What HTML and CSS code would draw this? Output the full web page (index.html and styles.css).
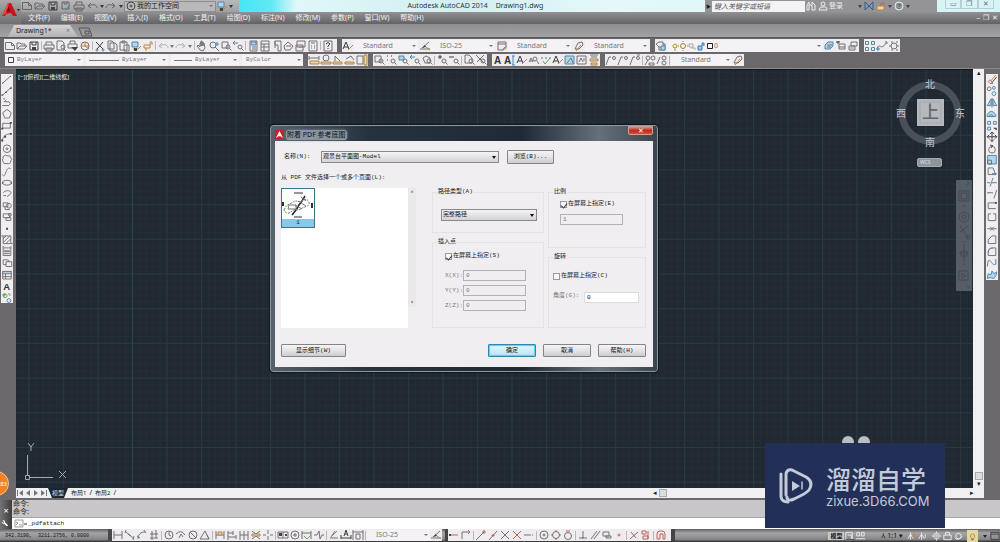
FILE: index.html
```html
<!DOCTYPE html>
<html lang="zh-CN">
<head>
<meta charset="utf-8">
<title>Autodesk AutoCAD 2014 Drawing1.dwg</title>
<link rel="stylesheet" href="styles.css">
</head>
<body>
<header class="top">
  <button class="applogo" aria-label="应用程序菜单"><svg viewBox="0 0 21 24"><path d="M2 16 8 3h3l6 13h-4l-2-3-5 1-1 2z" fill="#c8141c"/><path d="M8 3 2 16l5-4 2-9z" fill="#ef4a48"/><path d="m9 6 1 5-4 1z" fill="#7d0b10"/><path d="M17 9h3l-1.500 2z" fill="#222"/></svg></button>
  <div class="topmain">
    <div class="titlebar">
      <div class="quick">
        <div class="tools wide" data-tools="new open save saveas print undo ^ redo ^"></div>
        <label class="combo space"><svg class="mini" viewBox="0 0 12 12"><circle cx="6" cy="6" r="4"/><circle cx="6" cy="6" r="1"/></svg><select aria-label="工作空间"><option>我的工作空间</option></select></label>
        <div class="tools" data-tools="match ^"></div>
      </div>
      <h1 class="title"><span>Autodesk AutoCAD 2014</span><span>Drawing1.dwg</span></h1>
      <div class="info">
        <span class="play">▶</span>
        <input class="search" aria-label="搜索" placeholder="键入关键字或短语">
        <div class="tools" data-tools="binoc user"></div><button class="login">登录</button>
        <div class="tools" data-tools="^ exchange lock ^ help ^"></div>
      </div>
      <div class="winbtns"><button aria-label="最小化">▭</button><button aria-label="还原">❐</button><button aria-label="关闭">✕</button></div>
    </div>
    <nav class="menubar">
      <button>文件(F)</button><button>编辑(E)</button><button>视图(V)</button><button>插入(I)</button><button>格式(O)</button><button>工具(T)</button><button>绘图(D)</button><button>标注(N)</button><button>修改(M)</button><button>参数(P)</button><button>窗口(W)</button><button>帮助(H)</button>
      <span class="docbtns"><button aria-label="最小化文档">–</button><button aria-label="还原文档">❐</button><button aria-label="关闭文档">✕</button></span>
    </nav>
  </div>
</header>
<div class="filetabs">
  <button class="filetab"><span>Drawing1*</span><span class="x">×</span></button>
  <button class="newtab" aria-label="新建"><svg viewBox="0 0 16 10"><path d="M1 1h10l3 8H4zM7 4h4v3H7z" fill="none" stroke="#555"/></svg></button>
</div>
<div class="toolrows">
  <div class="row">
    <div class="tools bar first" data-tools="new open save | print preview publish web | cut copy paste match brush | undo ^ redo ^ | hand zoom zwin zprev | props grid palette sheet markup calc | qmark"></div>
    <div class="bar">
      <div class="tools" data-tools="txtstyle"></div><label class="combo style"><select aria-label="文字样式"><option>Standard</option></select></label>
      <div class="tools" data-tools="dimstyle"></div><label class="combo style"><select aria-label="标注样式"><option>ISO-25</option></select></label>
      <div class="tools" data-tools="tabstyle"></div><label class="combo style"><select aria-label="表格样式"><option>Standard</option></select></label>
      <div class="tools" data-tools="leadstyle"></div><label class="combo style"><select aria-label="多重引线样式"><option>Standard</option></select></label>
    </div>
    <div class="bar">
      <div class="tools" data-tools="layers"></div>
      <label class="combo layer"><svg viewBox="0 0 44 12"><g fill="none" stroke="#666"><path d="M4 8c-4-5 6-5 2 0zM4 10h2" stroke="#a98b2a" fill="#fff3a0"/><circle cx="13" cy="6" r="2.500" stroke="#a0803a"/><path d="M13 1v1M13 10v1M8 6h1M17 6h1" stroke="#a0803a"/><path d="M19 4h4v3h-4zM21 8h4v2" stroke="#aaa"/><path d="M28 6h4v4h-4zM32 6V3h2v3" stroke="#3a7fae" fill="#9cc9e2"/><path d="M37.500 3.500h5v5h-5z" stroke="#222"/></g></svg><select aria-label="图层"><option>0</option></select></label>
      <div class="tools" data-tools="lmake lprev lstate"></div>
    </div>
    <div class="tools bar" data-tools="blocks curve gear"></div>
  </div>
  <div class="row second">
    <div class="bar props">
      <label class="combo c1"><svg class="mini" viewBox="0 0 12 12"><path d="M3.500 3.500h5v5h-5z"/></svg><select aria-label="颜色"><option>ByLayer</option></select></label>
      <label class="combo c2"><span class="rule"></span><select aria-label="线型"><option>ByLayer</option></select></label>
      <label class="combo c3"><span class="rule short"></span><select aria-label="线宽"><option>ByLayer</option></select></label>
      <label class="combo c4"><select aria-label="打印样式"><option>ByColor</option></select></label>
    </div>
    <div class="tools bar" data-tools="odist oarea omass olist oid"></div>
    <div class="tools bar" data-tools="zwin zdyn zscale zprev zobj | zin zout | zall zext"></div>
    <div class="tools bar" data-tools="A AI txtstyle find spell txtstyle tscale tjust tconv"></div>
    <div class="bar">
      <div class="tools" data-tools="lead1 lead1 lead2 | lead3 lead4 |"></div>
      <label class="combo c5"><select aria-label="引线样式"><option>Standard</option></select></label>
      <div class="tools" data-tools="leadstyle"></div>
    </div>
  </div>
</div>
<main class="work">
  <aside class="side left"><div class="tools column draw" data-tools="line xline pline polygon rect arc circle cloud spline ellipse earc insert block point hatch gradient region table A addsel"></div></aside>
  <section class="view">
    <div class="canvas">
      <svg class="gridlines" aria-hidden="true">
        <defs>
          <pattern id="minor" width="6.900" height="6.940" patternUnits="userSpaceOnUse" x="116" y="30"><path d="M.5 0V7M0 .5H7" stroke="#242c36" stroke-width="1" fill="none"/></pattern>
          <pattern id="major" width="34.500" height="34.700" patternUnits="userSpaceOnUse" x="116" y="30"><path d="M.5 0V35M0 .5H35" stroke="#2b3740" stroke-width="1" fill="none"/></pattern>
        </defs>
        <rect width="100%" height="100%" fill="url(#minor)"/><rect width="100%" height="100%" fill="url(#major)"/>
        <path d="M116.500 0V420" stroke="#29493f"/>
      </svg>
      <span class="viewlabel">[−][俯视][二维线框]</span>
      <svg class="ucs" viewBox="0 0 46 42" fill="none" stroke="#a4a9af"><path d="M7.500 12v20M10 34.500h23M5.500 32.500h4v4h-4z"/><path d="m8 0 3 4 3-4M11 4v4M39 28l7 7M46 28l-7 7"/></svg>
      <div class="cube">
        <svg viewBox="0 0 72 76"><circle cx="36" cy="38" r="28" fill="none" stroke="#48505a" stroke-width="7"/><path d="M23 24h27v27H23z" fill="#b5b8bc"/><path d="M26 27h21v21H26z" fill="none" stroke="#a3a7ac"/></svg>
        <b class="n">北</b><b class="w">西</b><b class="e">东</b><b class="s">南</b><b class="face">上</b>
      </div>
      <button class="wcs">WCS</button>
      <svg class="navbar" viewBox="0 0 16 111"><rect width="16" height="111" rx="1" fill="#555d66"/><g fill="none" stroke="#434b54"><path d="M11 2l3 3M14 2l-3 3M3 11h10v10H3zM5 13h6v6H5zM7 26h3M4 52l8-6M4 46l8 12M8 64v18M3 73h10M5 71h6v5H5zM7 62h3M7 84h3M3 91h9v9H3zM6 93v5l4-2zM11 107h3"/><circle cx="8" cy="37" r="5"/><circle cx="8" cy="37" r="2"/><circle cx="12" cy="57" r="2"/></g></svg>
      <i class="head h1"></i><i class="head h2"></i>
    </div>
    <div class="vscroll"><span>▴</span><i></i><span>▾</span></div>
    <div class="sheets">
      <button aria-label="首页"><svg viewBox="0 0 8 8"><path d="M1 1h1v6H1zM7 1v6L3 4z"/></svg></button><button aria-label="上一页"><svg viewBox="0 0 8 8"><path d="M6 1v6L2 4z"/></svg></button><button aria-label="下一页"><svg viewBox="0 0 8 8"><path d="M2 1v6l4-3z"/></svg></button><button aria-label="末页"><svg viewBox="0 0 8 8"><path d="M6 1h1v6H6zM1 1v6l4-3z"/></svg></button>
      <button class="sheet on">模型</button><button class="sheet">布局1</button><span>/</span><button class="sheet">布局2</button><span>/</span>
      <div class="hscroll"><span>◂</span><i></i><span class="end">▸</span></div>
    </div>
  </section>
  <aside class="side right"><div class="tools column modify" data-tools="erase mcopy mirror offset array move rotate scale stretch trim extend breakp break join chamfer fillet blend explode"></div></aside>
</main>
<section class="command">
  <div class="cmdside"><button aria-label="关闭命令行">×</button><button aria-label="自定义"><svg viewBox="0 0 10 10"><path d="m2 2 2 2-1 1-2-2c0 3 2 3 3 3l3 3 2-1-4-4c0-2-1-3-3-2z" fill="#fff"/></svg></button></div>
  <div class="cmdmain">
    <div class="history"><div>命令:</div><div>命令:</div></div>
    <label class="cmdline"><svg viewBox="0 0 14 10"><path d="M1 1h8v7H1zM2 3l2 1-2 2M5 6h3" fill="none" stroke="#999"/><path d="M10 5h3" stroke="#333"/></svg><input aria-label="命令" value="_pdfattach"></label>
  </div>
</section>
<footer class="status">
  <div class="coords">342.3190,&nbsp; 3211.2756, 0.0000</div>
  <div class="bar"><div class="tools" data-tools="dlin dali darc dord | drad djog ddia dang | dqck dbase dcont dspace dbreak | dtol dctr dinsp djl | dedit dtedit dupd |"></div><label class="combo dim"><select aria-label="当前标注样式"><option>ISO-25</option></select></label><div class="tools" data-tools="dimstyle"></div></div>
  <div class="tools bar snap" data-tools="strack sfrom | send smid sint sapp sext | circle squad stan | sperp spar sins snode | snear snone | sset"></div>
  <div class="tray">
    <button class="model">模型</button><div class="tools" data-tools="layout quick"></div>
    <button class="annot">⅄ 1:1 ▾</button><div class="tools" data-tools="avis aauto"></div>
    <div class="tools" data-tools="gear2 lock2 hw"></div><div class="tools hot" data-tools="bulb"></div><div class="tools" data-tools="^ clean"></div>
  </div>
</footer>

<section class="dialog" role="dialog" aria-labelledby="dlgtitle">
  <div class="dlghead"><svg viewBox="0 0 10 10"><path d="M0 0h10v10H0z" fill="#c3222a"/><path d="m1 9 4-8 4 8-3-2H4z" fill="#fff"/></svg><h2 id="dlgtitle">附着 PDF 参考底图</h2><button class="close" aria-label="关闭">✕</button></div>
  <form class="dlgbody">
    <div class="namerow"><label for="name">名称(N):</label><div class="combo drop name"><select id="name"><option>观景台平面图-Model</option></select></div><button type="button" class="btn browse">浏览(B)...</button></div>
    <p class="pick">从 PDF 文件选择一个或多个页面(L):</p>
    <div class="cols">
      <div class="pages">
        <div class="list"><button type="button" class="thumb"><svg viewBox="0 0 32 30" fill="none" stroke="#333"><path d="M12 4h9M12 28h8"/><path d="M1 17v-4M30 14v5" stroke-width="2"/><path d="m10 26 4-5 3-5 3-4 3-5" stroke="#222" stroke-width="1.500"/><path d="M2 21c3-7 6-5 9-8 4-3 6 2 10-2 3-2 7 1 6 4-2 4-5 2-8 5-3 2-6-1-9 2-3 3-6 3-8-1z" stroke="#777" stroke-dasharray="2 1"/><path d="M7 16h7v4H6zM16 12l8 5M19 8l5 4M13 16l7 4" stroke="#777"/></svg><span>1</span></button></div>
        <div class="listbar"><span>▴</span><span>▾</span></div>
      </div>
      <div class="col">
        <fieldset class="g1"><legend>路径类型(A)</legend><div class="combo drop"><select aria-label="路径类型"><option>完整路径</option></select></div></fieldset>
        <fieldset class="g2"><legend>插入点</legend>
          <label class="check"><input type="checkbox" checked>在屏幕上指定(S)</label>
          <div class="xyz"><label for="x">X(X):</label><input id="x" value="0" disabled><label for="y">Y(Y):</label><input id="y" value="0" disabled><label for="z">Z(Z):</label><input id="z" value="0" disabled></div>
        </fieldset>
      </div>
      <div class="col last">
        <fieldset class="g3"><legend>比例</legend><label class="check"><input type="checkbox" checked>在屏幕上指定(E)</label><input aria-label="比例" value="1" disabled></fieldset>
        <fieldset class="g4"><legend>旋转</legend><label class="check"><input type="checkbox">在屏幕上指定(C)</label><div class="angle"><label for="ang">角度(G):</label><input id="ang" value="0"></div></fieldset>
      </div>
    </div>
    <div class="actions"><button type="button" class="btn detail">显示细节(W)</button><button type="button" class="btn ok">确定</button><button type="button" class="btn">取消</button><button type="button" class="btn">帮助(H)</button></div>
  </form>
</section>
<button class="badge">83</button>
<aside class="mark">
  <svg viewBox="0 0 34 36" fill="none" stroke="#c3cad8" stroke-width="3" stroke-linecap="round" stroke-linejoin="round"><path d="M2 6v23q1 5 7 5"/><path d="M7 27V7q0-6 6-5l14 7q8 5 3 13-2 3-15 9-7 3-7-2"/><path d="m13 13 8 5-8 5z" fill="#c3cad8" stroke="none"/><path d="M23 14v7" stroke-width="1.500"/></svg>
  <div><strong>溜溜自学</strong><span>zixue.3D66.COM</span></div>
</aside>
<script src="tools.js"></script>
</body>
</html>
```
FILE: styles.css
```css
* { box-sizing: border-box; }
body { margin: 0; height: 100vh; display: flex; flex-direction: column; overflow: hidden; position: relative; background: #6b696c; color: #222; font: 7px/8px "Noto Sans", "Noto Sans CJK SC", sans-serif; }
button, input, select { font: inherit; color: inherit; border: 0; padding: 0; margin: 0; background: none; border-radius: 0; min-width: 0; }
button { white-space: nowrap; }
svg { display: block; flex: none; }
i { font-style: normal; }

.tools { display: flex; align-items: center; }
.tools button { width: 12px; height: 12px; flex: none; }
.tools button svg { width: 12px; height: 12px; fill: none; stroke: #727174; }
.tools .caret { width: 6px; }
.tools button.caret svg { width: 6px; fill: #777; stroke: none; }
.tools .sep { width: 1px; height: 9px; margin: 0 1px; background: #b9b7ba; flex: none; }
.tools .b { stroke: #4b87b2; }
.tools .bf { stroke: #4b87b2; fill: #b4d6ea; }
.tools .o { stroke: #b8863a; }
.tools .of { stroke: #ae8748; fill: #eed3a0; }
.tools .r { stroke: #bd6158; }
.tools .g { stroke: #5ea55e; }
.bar .l { stroke: #b4b2b6; }
.tools .k { fill: #444; stroke: none; }
.tools .d { stroke: #3c3c3e; }
.tools text { fill: #333; stroke: none; font: bold 10px "Liberation Sans", sans-serif; }
.combo { display: flex; align-items: center; color: #777; background: #f4f2f5; }
.combo::after { content: ""; border: 2px solid transparent; border-top: 2px solid #777; border-bottom: 0; margin-right: 2px; flex: none; }
.combo select { appearance: none; flex: 1; height: 11px; outline: 0; }
.mini { width: 12px; height: 12px; fill: none; stroke: #444; }

.top { display: flex; height: 24px; flex: none; }
.applogo { width: 21px; height: 24px; background: linear-gradient(#aaa, #6f6f71); }
.applogo svg { width: 21px; height: 24px; }
.topmain { flex: 1; min-width: 0; }
.titlebar { height: 12px; display: flex; background: linear-gradient(90deg, #38e4f0 200px, #5fe9f5 250px, #dff7f8 275px, #d3eff2 45%, #e4f8f9 60%, #d6f4f5); }
.quick { display: flex; align-items: center; width: 218px; background: linear-gradient(#b9b8ba, #a09fa1); }
.quick .tools button svg { stroke: #666; }
.quick .tools button.caret svg { stroke: none; fill: #333; }
.wide button { width: 13px; }
.wide .caret { width: 6px; }
.space { width: 92px; height: 11px; background: #b9b8ba; color: #222; border: 1px solid #8d8c8e; }
.title { flex: 1; display: flex; justify-content: center; gap: 8px; margin: 0; padding-left: 7px; font-size: 7px; line-height: 12px; font-weight: 400; color: #333; }
.info { width: 232px; background: #949395; display: flex; align-items: center; color: #eee; }
.play { font-size: 5px; width: 7px; color: #222; text-align: center; }
.search { width: 93px; height: 11px; background: #f3f2f4; padding-left: 2px; font-style: italic; }
.search::placeholder { color: #555; opacity: 1; }
.info .tools button svg { stroke: #eee; }
.info .tools .b { stroke: #2f5d94; }
.info .tools button.caret svg { stroke: none; fill: #444; }
.login { width: 28px; text-align: left; }
.winbtns { width: 63px; padding: 0 6px 3px 8px; display: flex; }
.winbtns button { flex: 1; color: #667; line-height: 8px; border: 1px solid #b8ced4; border-top: 0; }
.menubar { height: 12px; display: flex; align-items: center; background: linear-gradient(#919092, #626163); color: #f2f2f2; padding-left: 7px; gap: 11px; }
.menubar > button { line-height: 12px; }
.docbtns { margin-left: auto; display: flex; gap: 3px; padding-right: 2px; }

.filetabs { height: 14px; flex: none; display: flex; align-items: flex-end; padding-left: 8px; background: linear-gradient(#8e8d8f, #a3a2a4); border-bottom: 1px solid #555; }
.filetab { width: 70px; height: 12px; padding: 0 8px; display: flex; justify-content: space-between; align-items: center; color: #222; background: linear-gradient(#d3d2d4, #b4b3b5); clip-path: polygon(6px 0, 62px 0, 100% 100%, 0 100%); }
.filetab .x { color: #777; }
.newtab svg { width: 16px; height: 10px; }

.toolrows { flex: none; display: flex; flex-direction: column; gap: 2px; padding: 1px 0 2px 4px; background: #6a686b; border-bottom: 1px solid #8a888b; }
.row { display: flex; gap: 5px; height: 13px; }
.second { height: 12px; }
.bar { display: flex; align-items: center; background: #eeecef; }
.first { padding-right: 3px; }
.row .combo { height: 12px; }
.style { width: 64px; margin-right: 1px; padding-left: 9px; }
.layer { width: 156px; }
.layer svg { width: 44px; height: 12px; margin-left: 3px; }
.props { gap: 3px; margin-left: 1px; font: 6px/8px "Liberation Mono", monospace; }
.c1 { width: 78px; }
.c2 { width: 82px; }
.c3 { width: 68px; }
.c4 { width: 61px; padding-left: 4px; }
.c5 { width: 61px; padding-left: 10px; }
.rule { width: 30px; height: 1px; background: #777; margin: 0 3px; }
.short { width: 18px; }

.work { flex: 1; min-height: 0; display: flex; }
.side { width: 16px; flex: none; padding-top: 5px; background: #6b696c; }
.column { display: grid; grid-auto-rows: minmax(0, 1fr); align-items: stretch; width: 12px; background: #f0eef1; }
.column button { height: auto; min-height: 0; }
.column button svg { height: 100%; }
.draw { height: 229px; margin-left: 1px; }
.modify { height: 206px; margin-left: 2px; }
.view { flex: 1; min-width: 0; display: grid; grid-template-columns: 1fr 11px; grid-template-rows: 1fr 10px; }
.canvas { position: relative; overflow: hidden; background: #202832; border-top: 1px solid #111820; }
.gridlines { width: 100%; height: 100%; }
.viewlabel { position: absolute; left: 2px; top: 3px; font-size: 6px; color: #e2e5e8; }
.ucs { position: absolute; left: 4px; bottom: 3px; width: 46px; height: 42px; }
.cube { position: absolute; right: 7px; top: 5px; width: 72px; height: 76px; }
.cube b { position: absolute; font-weight: 500; font-size: 10px; line-height: 12px; color: #b4b9bf; }
.cube .n { left: 31px; top: 3px; }
.cube .s { left: 31px; bottom: 3px; }
.cube .w { left: 2px; top: 32px; }
.cube .e { right: 1px; top: 32px; }
.cube .face { left: 28px; top: 28px; font-size: 17px; line-height: 18px; color: #62676d; }
.wcs { position: absolute; right: 31px; top: 88px; width: 25px; height: 9px; border: 1px solid #a6aab0; border-radius: 2px; background: #8f949b; color: #dfe2e5; font-size: 5px; line-height: 7px; text-align: left; padding-left: 2px; }
.navbar { position: absolute; right: 1px; top: 110px; width: 16px; height: 111px; }
.head { position: absolute; bottom: 40px; width: 12px; height: 12px; border-radius: 50%; background: #b9bcc0; }
.h1 { right: 119px; }
.h2 { right: 103px; }
.vscroll { background: #f0eff2; display: flex; flex-direction: column; align-items: center; }
.vscroll i { margin-top: auto; width: 8px; height: 8px; border: 1px solid #aaa; background: #ddd; }
.sheets { grid-column: 1 / 3; background: #f0eff2; display: flex; align-items: center; }
.sheets button svg { width: 8px; height: 8px; fill: #777; }
.sheet { padding: 0 3px; font-size: 6px; line-height: 10px; }
.sheets .on { background: #1d242d; color: #ddd; padding: 0 4px; clip-path: polygon(0 0, 100% 0, 80% 100%, 20% 100%); }
.hscroll { margin-left: auto; width: 331px; display: flex; align-items: center; gap: 2px; }
.hscroll i { width: 8px; height: 8px; border: 1px solid #aaa; background: #ddd; }
.hscroll .end { margin-left: auto; margin-right: 10px; }

.command { flex: none; display: flex; height: 31px; border-top: 2px solid #6b696c; }
.cmdside { width: 12px; background: linear-gradient(90deg, #747375, #3c3c3e); display: flex; flex-direction: column; align-items: center; padding-top: 7px; gap: 4px; color: #fff; }
.cmdside button { width: 10px; line-height: 8px; font-size: 9px; }
.cmdside svg { width: 8px; height: 8px; }
.cmdmain { flex: 1; display: flex; flex-direction: column; }
.history { background: #c8c6c9; padding: 0 1px; height: 18px; border-bottom: 1px solid #a5a3a6; }
.cmdline { flex: 1; background: #fff; display: flex; align-items: center; padding-left: 2px; }
.cmdline svg { width: 14px; height: 10px; }
.cmdline input { flex: 1; font: 6px/8px "Liberation Mono", monospace; height: 10px; outline: 0; }

.status { flex: none; height: 13px; display: flex; background: linear-gradient(#5f5f61, #a5a5a7 30%, #868688 80%, #2b2b2d); }
.coords { width: 112px; padding: 4px 0 0 5px; font: 5px/6px "Liberation Mono", monospace; color: #111; border-right: 4px solid #4a4a4c; }
.status .bar { height: 12px; }
.dim { width: 63px; height: 11px; padding-left: 9px; }
.snap { margin-left: 3px; border-left: 3px solid #444; border-right: 4px solid #444; width: 230px; }
.tray { margin-left: auto; display: flex; align-items: center; }
.tray button { color: #111; }
.tray .tools button { width: 11px; }
.tray .tools button svg { stroke: #eee; width: 11px; }
.tray .tools button.caret { width: 8px; }
.tray .tools button.caret svg { width: 8px; stroke: none; fill: #222; }
.model { padding: 0 1px 0 2px; background: #c9c9cb; font-weight: 700; font-size: 6px; }
.annot { margin: 0 3px 0 16px; }
.tray .tools + .tools { margin-left: 3px; }
.hot { background: #e4d7a0; }

.dialog { position: absolute; left: 270px; top: 125px; width: 388px; padding: 2px 4px 4px; border: 1px solid #8d99a5; outline: 1px solid #10161d; border-radius: 3px; background: linear-gradient(90deg, #56616c, #26323f 25%, #1f2a36 65%, #66707b 85%, #39444f); }
.dlghead { height: 13px; display: flex; align-items: center; gap: 2px; }
.dlghead svg { width: 9px; height: 9px; }
.dlghead h2 { margin: 0; padding: 0 1px; font-size: 7px; line-height: 10px; font-weight: 400; color: #0c1015; background: #8995a0; border-radius: 3px; box-shadow: 0 0 3px #7d8994; }
.close { margin: -2px 0 0 auto; align-self: flex-start; width: 25px; height: 9px; line-height: 8px; color: #fff; border: 1px solid #d79a90; border-radius: 0 0 2px 2px; background: linear-gradient(#d98c80, #bb2d1c 50%, #d0513c); }
.dlgbody { padding: 9px 7px 10px 6px; color: #222; background: #f0eef1; font: 6px/8px "Liberation Mono", "Noto Sans CJK SC", monospace; }
.namerow { display: flex; align-items: center; height: 14px; }
.namerow label { width: 40px; padding-left: 3px; }
.drop { height: 12px; border: 1px solid #8b898c; background: linear-gradient(#f4f3f5, #d4d2d5); color: #111; }
.drop::after { border-width: 3px 2px 0; border-top-color: #111; }
.drop select { height: 10px; padding-left: 1px; }
.name { width: 178px; }
.btn { width: 48px; height: 13px; border: 1px solid #858386; border-radius: 1px; background: linear-gradient(#f5f4f6, #e4e3e5 50%, #cccbcd); color: #111; line-height: 10px; }
.browse { width: 47px; height: 14px; margin-left: 8px; }
.pick { margin: 10px 0 6px; }
.cols { display: flex; }
.pages { width: 135px; display: flex; margin-right: 16px; }
.list { flex: 1; background: #fff; }
.thumb { display: block; width: 34px; height: 40px; border: 1px solid #3d7488; background: #fff; }
.thumb svg { width: 32px; height: 30px; }
.thumb span { display: block; height: 8px; line-height: 8px; background: #86c9ea; }
.listbar { width: 8px; display: flex; flex-direction: column; justify-content: space-between; align-items: center; background: #eae8eb; color: #777; height: 119px; }
.col { width: 112px; display: flex; flex-direction: column; gap: 5px; margin-right: 4px; }
.last { width: 98px; margin-right: 0; }
fieldset { --inset: 8px; margin: 0; min-width: 0; border: 1px solid #e4e2e5; padding: 0 6px 0 var(--inset); }
legend { padding: 0 1px; margin-left: calc(4px - var(--inset)); }
.g1 { padding-top: 13px; padding-bottom: 11px; }
.g2 { --inset: 12px; padding-top: 6px; padding-right: 17px; padding-bottom: 16px; flex: 1; }
.g3 { --inset: 11px; padding-top: 4px; padding-right: 22px; padding-bottom: 22px; }
.g4 { --inset: 4px; padding-top: 11px; padding-bottom: 24px; flex: 1; }
.check { display: flex; align-items: center; gap: 1px; white-space: nowrap; }
.check input { appearance: none; width: 7px; height: 7px; border: 1px solid #9a989b; background: #fafafa; display: grid; place-items: center; }
.check input:checked::before { content: ""; width: 3px; height: 5px; border: solid #33415c; border-width: 0 1px 1px 0; rotate: 40deg; }
fieldset input:not([type]) { height: 11px; width: 100%; border: 1px solid #b3b1b4; background: #f0eef1; color: #777; padding: 0 2px; }
.g3 input:not([type]) { margin-top: 6px; display: block; }
.xyz { display: grid; grid-template-columns: 18px 1fr; row-gap: 4px; margin-top: 10px; align-items: center; color: #777; }
.angle { display: flex; margin-top: 12px; color: #777; }
.angle label { width: 31px; flex: none; }
fieldset .angle input:not([type]) { background: #fff; border-color: #dddbde; color: #111; }
.actions { display: flex; gap: 7px; margin-top: 16px; }
.detail { width: 65px; margin-right: auto; }
.ok { border-color: #2f87a5; background: linear-gradient(#e8f6fc, #b8e4f6); box-shadow: inset 0 0 1px 1px #5ccdf0; }

.badge { position: absolute; left: -16px; bottom: 46px; width: 25px; height: 25px; border: 1px solid #f7c391; border-radius: 50%; background: #f58220; color: #fff; font-size: 6px; text-align: right; padding-right: 1px; }
.mark { position: absolute; right: 55px; bottom: 14px; width: 180px; height: 85px; background: #223058; color: #c3cad8; display: flex; align-items: center; gap: 13px; padding-left: 14px; }
.mark svg { width: 34px; height: 36px; }
.mark div { display: flex; flex-direction: column; gap: 6px; }
.mark strong { font: 500 25px/24px "Noto Sans CJK SC", sans-serif; }
.mark span { font: 13px/10px Inter, sans-serif; }
```
FILE: tools.js
```js
const P = (d, c) => `<path d="${d}"${c ? ` class="${c}"` : ''}/>`;
const C = (x, y, r, c) => `<circle cx="${x}" cy="${y}" r="${r}"${c ? ` class="${c}"` : ''}/>`;
const lens = C(5, 5, 3) + P('M7 7l4 4');
const corner = C(8, 7, 2) + P('M9.5 8.5l2 2');
const leader = P('M1 11l3-8h2') + C(9, 4, 1.5);
const dim = P('M2 2v8M10 2v8M2 6h8');
const icons = {
  new: P('M1.500 2.500h6l3 3v4h-9zM7.500 2.500v3h3'),
  open: P('M1 9V3h3l1 1h4v2M1 9l3-3h7l-3 3z'),
  save: P('M2 2h8v8H2zM4 2v3h4V2', 'd') + P('M4 7h4v3H4z', 'k'),
  saveas: P('M2 2h7v7H2zM4 2v2h3V2') + P('M5 10l5-5', 'b'),
  print: P('M3 5V2h6v3M1 5h10v4H1zM3 8h6v3H3z'),
  preview: P('M2 1h5l2 2v7H2z') + C(8, 7, 2) + P('M9 9l2 2'),
  publish: P('M3 4V1h5v3M1 4h9v4H1z') + P('M4 7h7l-3 4z', 'k'),
  web: C(6, 6, 4) + P('M2 6h8M6 2v4l4 3', 'o'),
  cut: P('M2 2l7 7M9 2L3 9', 'd') + C(3, 10, 1) + C(9, 10, 1, 'b'),
  copy: P('M2 1h4l2 2v6H2zM4 3h5l2 2v6H4z'),
  paste: P('M2 2h7v8H2zM4 1h3v2H4zM6 5h5v6H6z'),
  match: P('M2 2h6v5H2z', 'bf') + P('M3 9h5l3-3', 'o') + P('M4 8h3v3H4z', 'k'),
  brush: P('M2 5h6v3H2zM8 5V2h2v3M4 8v3', 'o'),
  undo: P('M11 8c0-4-5-4-8-2M5 3L2 6l3 2', 'l'),
  redo: P('M1 8c0-4 5-4 8-2M7 3l3 3-3 2', 'l'),
  hand: P('M4 10L1 6l1-1 2 2V3l1-1v4-5h1v5-4h1v4-3h1l1 5-2 3z'),
  zoom: lens + P('M9 2v4M7 4h4', 'b'),
  zwin: P('M2 2h6v6H2z') + corner,
  zprev: P('M1 3h5M3 1L1 3l2 2', 'b') + corner,
  zdyn: P('M2 2h1M6 2h1M2 6h1', 'd') + corner,
  zscale: P('M2 2h5v4H2z', 'bf') + corner,
  zobj: P('M2 4l3-2 4 2v5H4z') + corner,
  zin: P('M2 3h4M4 1v4', 'd') + corner,
  zout: P('M1 3h5', 'd') + corner,
  zall: P('M2 1h4l3 3v5H2z') + corner,
  zext: P('M1 1l8 8M9 1L2 8') + corner,
  props: P('M3 1h7v10H3z') + P('M4 2h5v3H4z', 'bf') + P('M5 7h4M5 9h4'),
  grid: P('M2 1h8v10H2zM2 4h8M2 7h8M5 4v7'),
  palette: P('M4 1h6v10H7V5H4zM4 1v7'),
  sheet: P('M1 6l4-4 5 4-3 4H2zM3 6h5'),
  markup: P('M2 1h8v6H2zM1 5h7v6H1z') + P('M4 7h4', 'r'),
  calc: P('M2 1h8v10H2zM4 3h4M4 6h1M7 6h1M4 8h1M7 8h1'),
  qmark: P('M2 1h8v10H2z') + P('M4 4q2-3 4 0l-2 2v1M6 8v1', 'd'),
  txtstyle: P('M1 9l3-7 3 7M2 7h4', 'd') + P('M6 10l5-5', 'o'),
  dimstyle: P('M1 9h10M3 8l7-6') + P('M3 8l3-3 1 2z', 'k') + P('M7 7l4 3', 'o'),
  tabstyle: P('M2 2h8v6l-3 2H2zM2 4h8') + P('M6 10l4-4', 'o'),
  leadstyle: P('M2 9l3-6 4-1 1 3-4 4z') + P('M3 11l5-6', 'o'),
  layers: P('M1 4l3-2h4v5H4zM4 7v3h6V4H8') + P('M6 6h4v4H6z', 'bf'),
  lmake: P('M2 5l3-3h5v4L7 9H2z', 'bf') + P('M4 5h5M4 7h4'),
  lprev: P('M1 2h4M3 1v3', 'd') + P('M4 4h6v5H4zM4 7h6'),
  lstate: P('M4 2h6v4H4z') + P('M2 6h6v4H2z') + P('M3 8h4', 'g'),
  blocks: P('M1.500 1.500h3v3h-3zM7.500 1.500h3v3h-3zM1.500 7.500h3v3h-3zM7.500 7.500h3v3h-3z', 'b'),
  curve: P('M1 9c2-8 4 3 9-6M9 2h2v2') + P('M1 8h2v2H1z', 'b'),
  gear: C(6, 6, 3) + P('M3 2h2M8 2h2M1 6h2M9 6h2M3 10h2M8 10h2'),
  odist: P('M1 4h10M1 2v4M11 2v4') + P('M2 7h9v3H2z', 'of'),
  oarea: C(6, 4, 3) + P('M1 8h10v2H1z', 'of'),
  omass: P('M3 7V2l5 5') + P('M1 8h9v2H1z', 'of'),
  olist: P('M2 5l5-3 3 4') + P('M1 8h9v2H1z', 'of'),
  oid: P('M1 2h6v8H1z') + P('M8 1h3v10H8z', 'of'),
  A: '<text x="2" y="10">A</text>',
  AI: '<text x="0" y="10">A</text>' + P('M9 2v9M8 2h3M8 11h3', 'b'),
  find: P('M1 8l2-4 2 4M2 7h3') + C(7, 5, 2) + P('M9 7l2 3'),
  spell: P('M1 4h2M5 4h2M9 4h2') + P('M3 7l2 3 5-6', 'g'),
  tscale: P('M1 2h9v8H1z', 'bf') + P('M3 9l4-5 2 5'),
  tjust: P('M1 2h9v8H1zM3 8l2-4 2 4M8 4v3'),
  tconv: P('M2 1h8M3 3h6') + P('M2 5h8v2H2zM3 9h6v2H3z', 'of'),
  lead1: leader,
  lead2: leader + P('M8 1h3', 'r'),
  lead3: C(4, 4, 2) + C(9, 4, 2) + P('M1 11l3-5M5 9h5v2H5z'),
  lead4: P('M1 10l3-7') + C(8, 4, 2) + C(8, 9, 2),
  line: P('M1 10l9-8') + P('M1 9h1v1H1zM9 2h1v1H9z', 'k'),
  xline: P('M1 11l10-9') + P('M0 10h2v1H0zM4 7h2v1H4zM9 3h2v1H9z', 'k'),
  pline: P('M2 2h2M3 5h5q3 2 0 4H1M3 5l2-2'),
  polygon: P('M6 1.500l4.500 3.500-2 5.500h-5L1.500 5z'),
  rect: P('M1.500 3.500h8v5h-8z') + P('M0 8h2v2H0zM9 2h2v2H9z', 'k'),
  arc: P('M1 10c1-5 4-7 9-7') + P('M0 9h2v2H0zM9 2h2v2H9zM3 5h2v2H3z', 'k'),
  circle: C(6, 6, 4) + C(6, 6, 1),
  cloud: P('M3 2q2-2 3 0 4-1 4 2 2 2 0 3 0 4-4 3-4 1-4-2-2-2 0-3-1-3 1-3z'),
  spline: P('M1 9c2 3 3 0 4-3s3-5 5-3'),
  ellipse: '<ellipse cx="6" cy="6" rx="4.500" ry="2.500"/>' + P('M1 5h1v2H1zM10 5h1v2h-1z', 'k'),
  earc: P('M2 8h3M2 5c3-4 11-2 7 2l-3 2'),
  insert: P('M2 3h5v4H2z') + C(8, 6, 2.500) + P('M4 7v3h5'),
  block: P('M2 3h7v4H2zM5 7h5v3H5z') + C(9, 4, 1.500),
  point: P('M5 5h2v2H5z', 'k'),
  hatch: P('M2 2h8v8H2zM2 5l3-3M2 9l7-7M5 10l5-5M0 2h2M10 10h2'),
  gradient: P('M2 2h8v8H2zM1 1h2M9 1h2M3 5h6M3 6h6M3 8h6'),
  region: P('M2 3h4q3 0 2 2h3v5H5V8H2zM5 8V5h3'),
  table: P('M1.500 2.500h9v8h-9zM1 5h10M1 8h10M4.500 5v5') + P('M1 3h10', 'b'),
  addsel: P('M1 3h4M3 1v4', 'g') + C(4, 4, 2, 'g') + C(8, 9, 2, 'b') + P('M7 2h2v2', 'o'),
  erase: P('M5 7l5-6', 'o') + P('M6 9l5-6', 'd') + P('M2 8l2 2h3l-3-4z', 'r'),
  mcopy: C(3, 4, 2) + C(8, 3, 1.500, 'b') + C(8, 9, 2, 'b'),
  mirror: P('M5 2v7H1zM7 2v7h4z', 'bf') + P('M6 1v10'),
  offset: P('M1 9V7q4-7 9 0v2z', 'bf') + P('M3 9q2-4 5 0'),
  array: P('M1.500 1.500h3v3h-3zM7.500 1.500h3v3h-3zM1.500 7.500h3v3h-3z', 'b') + P('M7 8h4v3z', 'k'),
  move: P('M6 1v10M1 6h10M4 3l2-2 2 2M4 9l2 2 2-2M3 4L1 6l2 2M9 4l2 2-2 2', 'd'),
  rotate: C(6, 7, 3.500) + P('M4 2l3 1-2 2', 'd'),
  scale: P('M1.500 1.500h9v9h-9z', 'bf') + P('M1.500 6.500h4v4h-4z'),
  stretch: P('M2 2h5l3 7H2z') + P('M6 8h5', 'b'),
  trim: P('M1 6h3M6 6h5') + P('M4 10l3-9', 'b'),
  extend: P('M1 5h6M8 11l3-9') + P('M2 5h1', 'b'),
  breakp: P('M10 3H2v6h8') + P('M9 2h2v2H9z', 'k'),
  break: P('M4 3H2v7h8V3H8') + P('M4 3h1M7 3h1', 'b'),
  join: P('M1 6h10M4 4l2 2-2 2M8 4L6 6l2 2'),
  chamfer: P('M2 10V6l4-4h4v8z') + P('M2 6l4-4', 'b'),
  fillet: P('M2 10V7q0-5 5-5h3v8z') + P('M2 7q0-5 5-5', 'b'),
  blend: P('M1 10l1-6M10 2v6') + P('M2 4c3-3 4 7 8 3', 'b'),
  explode: P('M2 5l3 1 1-4 2 3 3-2-1 4-2 3-4-1-3 1z', 'bf'),
  dlin: dim,
  dali: P('M1 2l9 8M2 1L1 4M10 7l-1 4M4 5l3 2'),
  darc: P('M2 10c0-5 3-7 7-7M1 7l3 2M8 1l2 3'),
  dord: P('M2 5h8M2 9h8M4 2v9M8 1v8'),
  drad: C(6, 6, 4) + P('M6 6V3M6 6l2 1'),
  djog: P('M1 5q5-5 9 1M6 5l-2 4M6 5l2 3'),
  ddia: C(6, 6, 4) + P('M3 3l6 6'),
  dang: P('M1 10h9L6 2zM8 6l2 4'),
  dqck: dim + P('M4 3h4v3H4z', 'of'),
  dbase: P('M2 2v9M2 4h5M7 2v4M2 8h8M10 6v4'),
  dcont: P('M2 2v9M6 2v9M10 2v9M2 6h8'),
  dspace: P('M2 2l4 3 4-3M2 10l4-3 4 3') + P('M2 5h8v2H2z', 'of'),
  dbreak: P('M6 1v4M6 7v4M1 6h3M8 6h3'),
  dtol: P('M1 3h10v6H1zM6 3v6') + P('M2 4h3v3H2zM8 5h2v2H8z', 'k'),
  dctr: C(6, 6, 4) + P('M6 4v4M4 6h4'),
  dinsp: P('M1 2v8M10 2v8M1 4h9') + P('M3 7l3 3 4-4', 'g'),
  djl: P('M1 6h3l2-4 1 8 2-4h2'),
  dedit: P('M2 9h8M3 8l4-6') + P('M4 7l5-5', 'of'),
  dtedit: P('M1 6v4M11 6v4M1 9h10M4 7l2-6 2 6M5 5h2', 'd'),
  dupd: P('M1 1v10M11 1v10M1 3h10M4 5h4v5H4z'),
  strack: P('M1 6h9', 'r') + P('M1 5h2v2H1z', 'k'),
  sfrom: P('M2 10V3h7') + P('M8 1l2 2-2 2', 'r'),
  send: P('M1 11l8-8') + P('M8 2h2v2H8z', 'r'),
  smid: P('M2 11l8-9') + P('M5 6h2v1H5z', 'r'),
  sint: P('M2 2l8 8M10 2l-8 8'),
  sapp: P('M2 2l8 8M10 2l-8 8', 'r'),
  sext: P('M1 6h7M9 6h1'),
  squad: C(6, 6, 3.500) + P('M5 2h2M5 10h2M2 5v2M10 5v2', 'r'),
  stan: C(6, 7, 3.500) + P('M4 2h4', 'r'),
  sperp: P('M6 2v7M2 9h8') + P('M5 9h2', 'r'),
  spar: P('M2 10l6-8M5 10l6-8'),
  sins: P('M2 3h6v4H2zM5 7h5v2H5z'),
  snode: C(6, 6, 1, 'r'),
  snear: P('M2 10l8-7') + P('M3 3l5 6', 'r'),
  snone: P('M2 2h4v3H2zM3 7h5v3H3zM8 2v8', 'r'),
  sset: P('M2 10V5q0-3 3-3h2q3 0 3 3v5H8V5H5v5z', 'r'),
  binoc: P('M2 10V5l2-3v8zM7 10V2l3 3v5zM4 5h3'),
  user: C(6, 4, 2) + P('M2 10q1-4 4-3 4-1 4 3z'),
  exchange: P('M2 2l8 8M10 2l-8 8M2 2v8M10 2v8', 'b'),
  lock: P('M2 6h7v4H2z', 'of') + P('M6 6V3h3v2', 'r'),
  help: C(6, 6, 4) + P('M4.500 5q1-2 3 0L6 6.500V7M6 8v1', 'b'),
  layout: P('M2 2h7v8H2zM4 5h4v4') + P('M2 10h9', 'd'),
  quick: P('M2 2h3v4H2zM7 2h3v4H7zM1 9h10'),
  avis: P('M5 2v8M2 9l3-5 3 5') + P('M8 2l2 3-3 2', 'o'),
  aauto: P('M5 2v8M2 9l3-5 3 5M9 4v4'),
  gear2: C(6, 6, 3) + C(6, 6, 1) + P('M6 1v2M6 9v2M1 6h2M9 6h2'),
  lock2: P('M2 5h8v5H2zM4 5V2h4v3'),
  hw: C(6, 6, 3) + P('M2 8q4 4 8-2'),
  bulb: P('M5 9C0 2 12 2 7 9z', 'of') + P('M5 10h2', 'd'),
  clean: P('M2 2h9v8H2zM2 4h9', 'd')
};

for (const bar of document.querySelectorAll('[data-tools]')) {
  bar.innerHTML = bar.dataset.tools.split(' ').map(name => {
    if (name === '|') return '<span class="sep"></span>';
    if (name === '^') return '<button type="button" class="caret" aria-label="展开"><svg viewBox="0 0 6 12"><path d="M1 5h4L3 8z"/></svg></button>';
    return `<button type="button" aria-label="${name}"><svg viewBox="0 0 12 12">${icons[name]}</svg></button>`;
  }).join('');
}
```
